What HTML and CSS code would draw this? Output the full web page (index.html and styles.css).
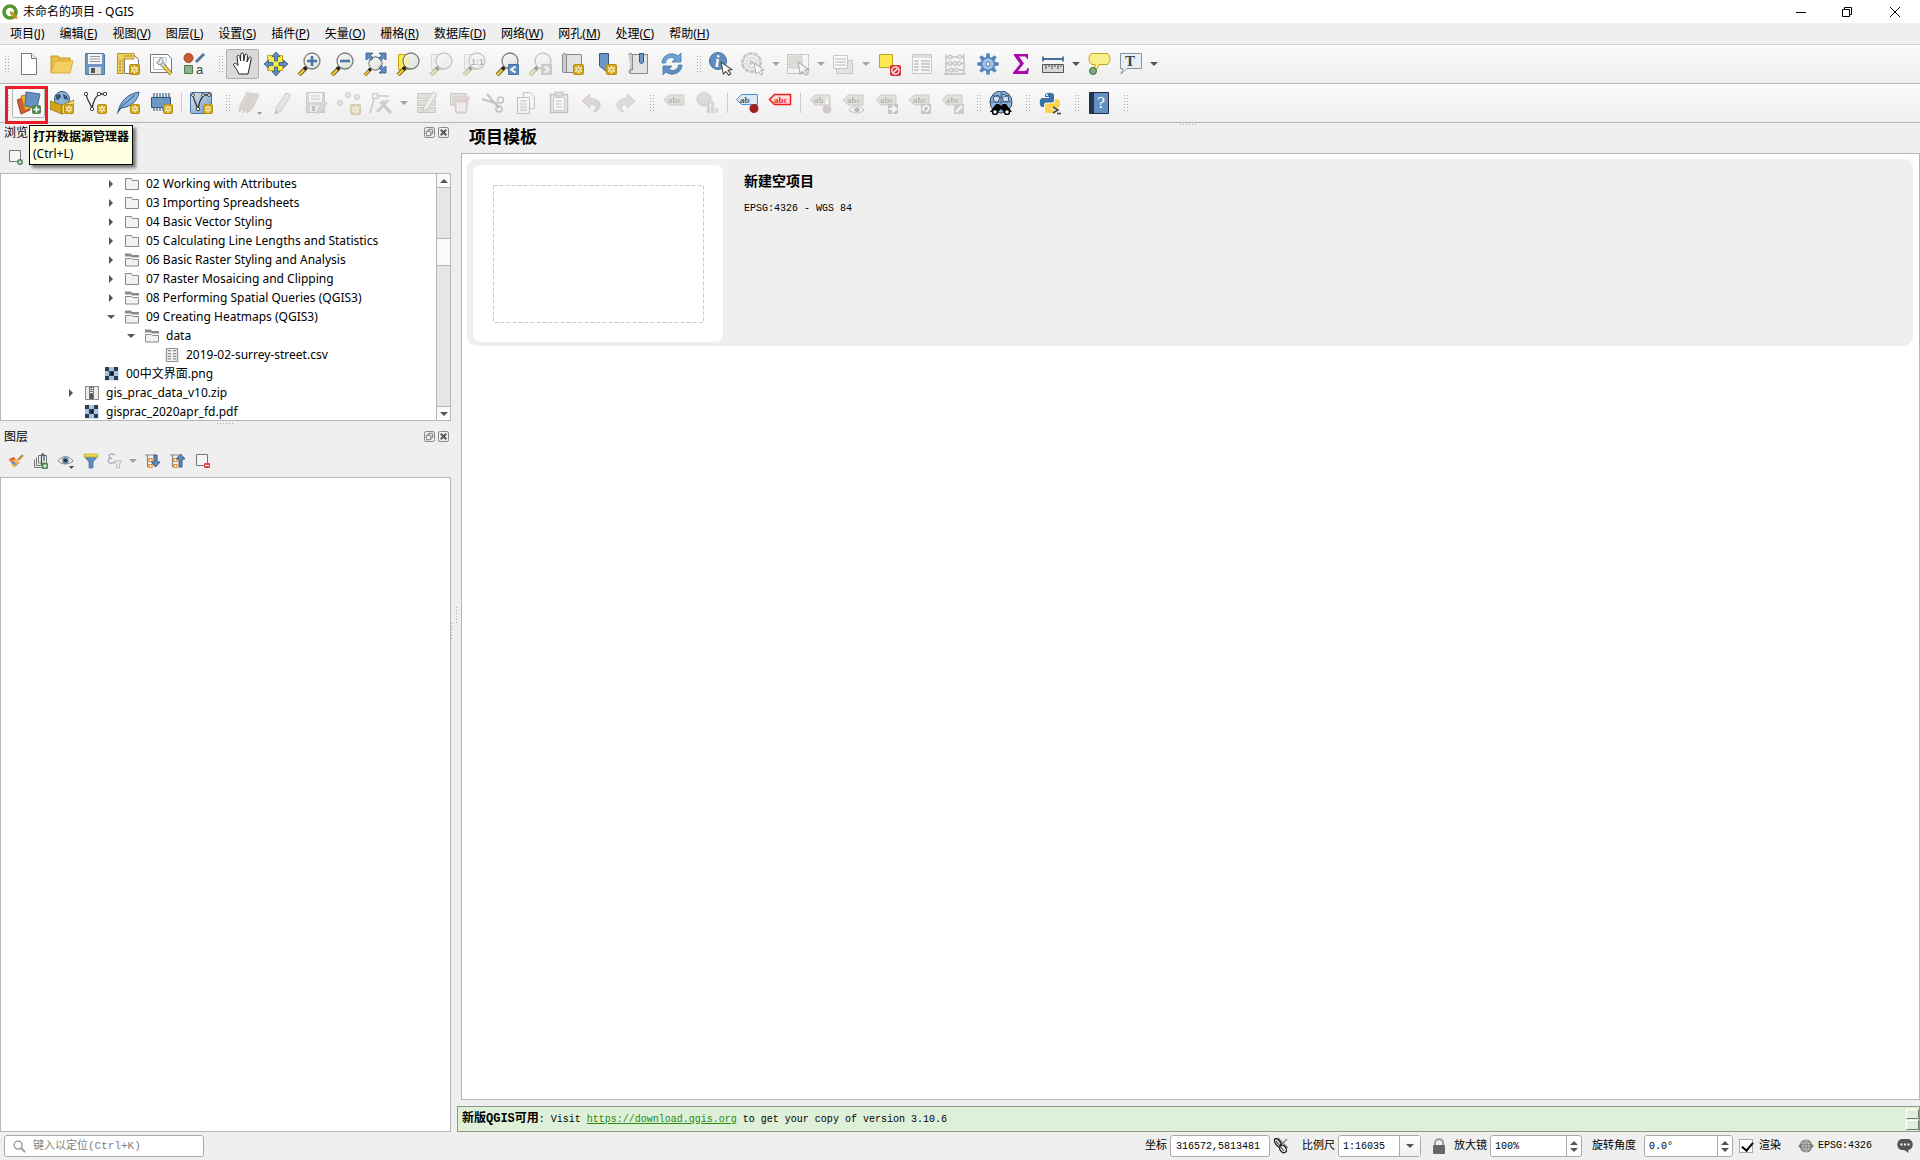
FILE: index.html
```
<!DOCTYPE html>
<html lang="zh-CN">
<head>
  <meta charset="UTF-8" />
  <meta name="viewport" content="width=device-width, initial-scale=1.0"/>
  <title>未命名的项目 - QGIS</title>
  <link rel="stylesheet" href="styles.css">
</head>
<body>

  <!-- 共用图形 -->
  <svg class="defs" aria-hidden="true">
    <defs>
      <linearGradient id="lensFill" x1="0" y1="0" x2="1" y2="1">
        <stop offset="0" stop-color="#fdfdfb"/><stop offset="1" stop-color="#d9ddd6"/>
      </linearGradient>
      <linearGradient id="blueFill" x1="0" y1="0" x2="1" y2="1">
        <stop offset="0" stop-color="#dbe6f1"/><stop offset="1" stop-color="#6d97c4"/>
      </linearGradient>
      <symbol id="new" viewBox="0 0 10 10">
        <rect x=".5" y=".5" width="9" height="9" rx="1.5" fill="#d0a820" stroke="#b98f10"/>
        <path d="M5 1.500V8.500M2 3.200L8 6.800M8 3.200L2 6.800" stroke="#fffbe0" stroke-width="1.300"/>
        <circle cx="5" cy="5" r="1.100" fill="#d0a820"/>
      </symbol>
      <symbol id="lens" viewBox="0 0 24 24">
        <path d="M2 23L9 16" stroke="#6b5a20" stroke-width="4"/>
        <path d="M2 23L7.500 17.500" stroke="#f2c92e" stroke-width="2.400"/>
        <path d="M7 17.500L10 14.500" stroke="#222" stroke-width="3.400"/>
        <circle cx="15" cy="9" r="8" fill="url(#lensFill)" stroke="#7a7d78" stroke-width="1.300"/>
      </symbol>
      <symbol id="cursor" viewBox="0 0 12 14">
        <path d="M1 1L11 8L7.500 8.500L10 12L8 13.300L5.500 9.800L3 12Z" fill="#fff" stroke="#444" stroke-width="1"/>
      </symbol>
      <symbol id="tag" viewBox="0 0 22 12">
        <path d="M6 1H21V11H6L1 6Z" fill="currentColor" stroke="#9a9670" stroke-width="1"/>
      </symbol>
      <symbol id="folder" viewBox="0 0 14 14">
        <path d="M.5 1.500H6.500L7.500 3.500H13.500V12.500H.5Z" fill="#f2f2f2" stroke="#8a8a86"/>
      </symbol>
      <symbol id="folder-link" viewBox="0 0 14 14">
        <path d="M0 .5H6L7 2H14V4.500H7L6 3.500H0Z" fill="#8a8a86"/>
        <path d="M.5 5.500H6.500L7.500 6.500H13.500V13H.5Z" fill="#f2f2f2" stroke="#8a8a86"/>
      </symbol>
      <symbol id="image" viewBox="0 0 14 14">
        <path d="M0 0H14V14H0Z" fill="#dfe9f4"/>
        <path d="M0 0H4V4H0ZM9 0H13V4H9ZM4 4H9V9H4ZM0 9H4V13H0ZM9 9H13V13H9Z" fill="#2c3e55"/>
        <path d="M4 0H9V4H4ZM0 4H4V9H0ZM9 4H13V9H9ZM4 9H9V13H4Z" fill="#a9c2de"/>
        <path d="M6 5.500H8V8H6Z" fill="#111"/>
      </symbol>
      <symbol id="float" viewBox="0 0 12 12">
        <rect x=".5" y=".5" width="11" height="11" rx="2" fill="none" stroke="#777"/>
        <rect x="4.500" y="2.500" width="5" height="5" rx="1" fill="none" stroke="#666"/>
        <rect x="2.500" y="4.500" width="5" height="5" rx="1" fill="#efefef" stroke="#666"/>
      </symbol>
      <symbol id="shut" viewBox="0 0 12 12">
        <rect x=".5" y=".5" width="11" height="11" rx="2" fill="none" stroke="#777"/>
        <path d="M3 3L9 9M9 3L3 9" stroke="#555" stroke-width="2"/>
      </symbol>
    </defs>
  </svg>

  <!-- 标题栏 -->
  <header class="titlebar">
    <svg class="logo" viewBox="0 0 16 16">
      <circle cx="8" cy="8" r="6" fill="none" stroke="#589632" stroke-width="3.600"/>
      <path d="M8.500 8L12 8.500L16 14.500H12.500Z" fill="#ee7913"/>
      <path d="M7.500 7.500H11L10.500 9L13 12L11.500 13.500L8.500 10.500Z" fill="#93b023"/>
    </svg>
    <h1>未命名的项目 - QGIS</h1>
    <div class="window-buttons">
      <button aria-label="最小化"><svg viewBox="0 0 10 10"><path d="M0 5.500H10" stroke="#000"/></svg></button>
      <button aria-label="还原"><svg viewBox="0 0 10 10"><path d="M.5 2.500H7.500V9.500H.5ZM2.500 2.500V.5H9.500V7.500H7.500" fill="none" stroke="#000"/></svg></button>
      <button aria-label="关闭"><svg viewBox="0 0 10 10"><path d="M0 0L10 10M10 0L0 10" stroke="#000"/></svg></button>
    </div>
  </header>

  <nav class="menubar">
    <button>项目(<u>J</u>)</button>
    <button>编辑(<u>E</u>)</button>
    <button>视图(<u>V</u>)</button>
    <button>图层(<u>L</u>)</button>
    <button>设置(<u>S</u>)</button>
    <button>插件(<u>P</u>)</button>
    <button>矢量(<u>O</u>)</button>
    <button>栅格(<u>R</u>)</button>
    <button>数据库(<u>D</u>)</button>
    <button>网络(<u>W</u>)</button>
    <button>网孔(<u>M</u>)</button>
    <button>处理(<u>C</u>)</button>
    <button>帮助(<u>H</u>)</button>
  </nav>

  <!-- 工具栏 1 -->
  <div class="toolbar">
    <i class="grip first"></i>
    <button aria-label="新建"><svg viewBox="0 0 24 24"><path d="M4.500 1.500H14.500L19.500 6.500V22.500H4.500Z" fill="#fff" stroke="#777"/><path d="M14.500 1.500V6.500H19.500" fill="#eee" stroke="#777"/></svg></button>
    <button aria-label="打开"><svg viewBox="0 0 24 24"><path d="M1 21V4H8L10 6H20V9" fill="#e6bd45" stroke="#c79b22"/><path d="M5 9H23L20 21H1Z" fill="#f3cf62" stroke="#d8ae3c"/></svg></button>
    <button aria-label="保存"><svg viewBox="0 0 24 24"><path d="M2.500 1.500H20.500L21.500 2.500V22.500H2.500Z" fill="#6d97c4" stroke="#55799f"/><path d="M5 2H19V12H5Z" fill="#f4f4f4"/><path d="M7 4.500H17M7 7H17M7 9.500H17" stroke="#999"/><path d="M6 15H18V22H6Z" fill="#e0e0e0"/><path d="M8 16H12V21H8Z" fill="#555"/></svg></button>
    <button aria-label="新建打印布局"><svg viewBox="0 0 24 24"><path d="M8.500 3.500H18.500L22.500 7.500V21.500H8.500Z" fill="#fff" stroke="#777"/><path d="M1.500 1.500H18V7H7V21.500H1.500Z" fill="#f0d264" stroke="#b99420"/><path d="M3 9H5M3 12H5M3 15H5M3 18H5M9 3V5M12 3V5M15 3V5" stroke="#8a6d10"/><use href="#new" x="13" y="12" width="11" height="11"/></svg></button>
    <button aria-label="布局管理器"><svg viewBox="0 0 24 24"><path d="M1.500 2.500H18.500L22.500 6.500V20.500H1.500Z" fill="#fff" stroke="#777"/><path d="M4.500 5.500H17V17.500H4.500Z" fill="none" stroke="#a9c2de"/><path d="M14 13L22 22" stroke="#8a6d10" stroke-width="4"/><path d="M14 13L22 22" stroke="#f0d264" stroke-width="2.400"/><path d="M10 9L15 14" stroke="#777" stroke-width="4"/><path d="M10 9L15 14" stroke="#ddd" stroke-width="2.500"/><path d="M12.500 6A3.500 3.500 0 1 1 7.500 10.500L10 9.500L10.500 7Z" fill="#eee" stroke="#888"/></svg></button>
    <button aria-label="样式管理器"><svg viewBox="0 0 24 24"><circle cx="6.500" cy="6" r="4.500" fill="#cc5a33" stroke="#a54322"/><path d="M22 2L14 10" stroke="#55799f" stroke-width="3"/><path d="M2.500 13.500H10.500V21.500H2.500Z" fill="#8cb48c" stroke="#4e7a4e"/><text x="14" y="22" class="glyph-a">a</text></svg></button>

    <i class="grip"></i>
    <button class="active" aria-label="平移地图"><svg viewBox="0 0 24 24"><path d="M8 22C6.500 18 3 14 2.500 12.500C3 11 5 11 7 13.500L6 4.500C6.500 2.800 8.500 3 8.800 4.500L9.500 9L9.800 2C10.500.5 12.500.7 12.700 2V9L14 2.800C15 1.600 16.500 2.200 16.600 3.500L16 10L18 5.500C19 4.500 20.500 5.300 20.300 6.500L18.500 15L17 22Z" fill="#fff" stroke="#222"/></svg></button>
    <button aria-label="平移至选择"><svg viewBox="0 0 24 24"><path d="M3.500 3.500H18.500V18.500H3.500Z" fill="#fae94b" stroke="#c3a51a"/><path d="M12 0L16 4.500H13.500V9H10.500V4.500H8ZM12 24L8 19.500H10.500V15H13.500V19.500H16ZM0 12L4.500 8V10.500H9V13.500H4.500V16ZM24 12L19.500 16V13.500H15V10.500H19.500V8Z" fill="#5e8ec0" stroke="#34597f" stroke-width=".8"/></svg></button>
    <button aria-label="放大"><svg viewBox="0 0 24 24"><use href="#lens"/><path d="M15 4V14M10 9H20" stroke="#4a77aa" stroke-width="2.600"/></svg></button>
    <button aria-label="缩小"><svg viewBox="0 0 24 24"><use href="#lens"/><path d="M10 9H20" stroke="#4a77aa" stroke-width="2.600"/></svg></button>
    <button aria-label="全图显示"><svg viewBox="0 0 24 24"><use href="#lens" x="0" y="4" width="20" height="20"/><path d="M3 1H10L7.500 3.500L10 6L8 8.500L5.500 6L3 8ZM23 1H16L18.500 3.500L16 6L18 8.500L20.500 6L23 8ZM23 21H16L18.500 18.500L16 16L18 13.500L20.500 16L23 14Z" fill="#5e8ec0" stroke="#34597f" stroke-width=".8"/></svg></button>
    <button aria-label="缩放到选择"><svg viewBox="0 0 24 24"><path d="M2.500 2.500H14V17.500H2.500Z" fill="#fae94b" stroke="#c3a51a"/><use href="#lens"/><path d="M14 3V15C8 14 8 5 14 3Z" fill="#f3ecae"/></svg></button>
    <button disabled aria-label="缩放到图层"><svg viewBox="0 0 24 24"><path d="M2.500 2.500H14V17.500H2.500Z" fill="#e8e8e4" stroke="#aaa"/><use href="#lens"/></svg></button>
    <button disabled aria-label="原始分辨率"><svg viewBox="0 0 24 24"><path d="M2.500 2.500H14V17.500H2.500Z" fill="#e8e8e4" stroke="#aaa"/><use href="#lens"/><text x="9" y="13" class="glyph-ratio">1:1</text></svg></button>
    <button aria-label="上一视图"><svg viewBox="0 0 24 24"><use href="#lens"/><path d="M13.500 12.500H23.500V22.500H13.500Z" fill="#5e8ec0" stroke="#46719d"/><path d="M20.500 14.500L16 17.500L20.500 20.500" fill="none" stroke="#fff" stroke-width="1.800"/></svg></button>
    <button disabled aria-label="下一视图"><svg viewBox="0 0 24 24"><use href="#lens"/><path d="M13.500 12.500H23.500V22.500H13.500Z" fill="#999" stroke="#888"/><path d="M16.500 14.500L21 17.500L16.500 20.500" fill="none" stroke="#fff" stroke-width="1.800"/></svg></button>
    <button aria-label="新建地图视图"><svg viewBox="0 0 24 24"><path d="M5.500 2.500H20.500V20.500H3.500V4Z" fill="#e2e2e2" stroke="#888"/><path d="M1.500 3C2 1 5.500 1 5.500 3V20.500H3C1.500 20.500 1.500 19 1.500 18Z" fill="#ccc" stroke="#888"/><use href="#new" x="12" y="12" width="11" height="11"/></svg></button>
    <button aria-label="新建书签"><svg viewBox="0 0 24 24"><path d="M5.500 1.500H14.500V21.500L10 17.500L5.500 14Z" fill="#6d97c4" stroke="#34597f"/><use href="#new" x="12" y="12" width="11" height="11"/></svg></button>
    <button aria-label="显示书签"><svg viewBox="0 0 24 24"><path d="M5.500 2.500H20.500V21.500H3.500V4Z" fill="#e2e2e2" stroke="#888"/><path d="M1.500 3C2 1 5.500 1 5.500 3V18H3C1.500 18 1.500 21.500 4 21.500" fill="#ccc" stroke="#888"/><path d="M12.500 1.500H16.500V10L14.500 12L12.500 10Z" fill="#6d97c4" stroke="#34597f"/></svg></button>
    <button aria-label="刷新"><svg viewBox="0 0 24 24"><path d="M2 11C2 3 12-1 18 4L21 1V10H12L15 7C11 4 6 6 5.500 11Z" fill="#6da1d8" stroke="#4678ad" stroke-width=".8"/><path d="M22 13C22 21 12 25 6 20L3 23V14H12L9 17C13 20 18 18 18.500 13Z" fill="#5e8ec0" stroke="#4678ad" stroke-width=".8"/></svg></button>

    <i class="grip"></i>
    <button aria-label="识别要素"><svg viewBox="0 0 24 24"><circle cx="9" cy="9" r="8.500" fill="#5e8ec0" stroke="#46719d"/><text x="6" y="15" class="glyph-i">i</text><use href="#cursor" x="11" y="9" width="13" height="15"/></svg></button>
    <button class="drop" disabled aria-label="运行动作"><svg viewBox="0 0 24 24"><circle cx="10.500" cy="10.500" r="9" fill="none" stroke="#888" stroke-width="3" stroke-dasharray="4.500 1"/><circle cx="10.500" cy="10.500" r="8" fill="#eee" stroke="#999"/><circle cx="10.500" cy="10.500" r="5" fill="#eee" stroke="#888"/><path d="M8.500 7.500L14 10.500L8.500 13.500Z" fill="#888"/><use href="#cursor" x="12" y="10" width="12" height="14"/></svg><i class="arrow"></i></button>
    <button class="drop" disabled aria-label="选择要素"><svg viewBox="0 0 24 24"><path d="M1.500 2.500H22.500V21.500H1.500Z" fill="none" stroke="#555" stroke-dasharray="2 1"/><path d="M3 4H16V16H3Z" fill="#bdb9a0" stroke="#999"/><use href="#cursor" x="11" y="9" width="13" height="15"/></svg><i class="arrow"></i></button>
    <button class="drop" disabled aria-label="按值选择"><svg viewBox="0 0 24 24"><path d="M9.500 8.500H21.500V21.500H5.500V14Z" fill="#cfccb4" stroke="#888"/><path d="M2.500 3.500H16.500V16.500H2.500Z" fill="#fff" stroke="#888"/><path d="M4 7H15M4 10H15M4 13H15" stroke="#999" stroke-width="1.500"/></svg><i class="arrow"></i></button>
    <button aria-label="取消选择"><svg viewBox="0 0 24 24"><path d="M2.500 2.500H15.500V15.500H2.500Z" fill="#fce94f" stroke="#c3a51a"/><rect x="13" y="13" width="11" height="11" rx="2" fill="#dc3030"/><circle cx="18.500" cy="18.500" r="3.600" fill="none" stroke="#fff" stroke-width="1.300"/><path d="M16.500 20.500L20.500 16.500" stroke="#fff" stroke-width="1.300"/></svg></button>
    <button disabled aria-label="属性表"><svg viewBox="0 0 24 24"><path d="M2.500 2.500H21.500V21.500H2.500Z" fill="#fff" stroke="#888"/><path d="M3 3H21V6H3Z" fill="#bbb"/><path d="M4 9H9M11 9H20M4 12H9M11 12H20M4 15H9M11 15H20M4 18H9M11 18H20" stroke="#777" stroke-width="1.300"/></svg></button>
    <button disabled aria-label="字段计算器"><svg viewBox="0 0 24 24"><path d="M3 2V22M21 2V22M1 22H23M3 5H21M3 11.500H21M3 18H21" fill="none" stroke="#777" stroke-width="1.300"/><g fill="#ddc" stroke="#666"><circle cx="7" cy="5" r="2"/><circle cx="17" cy="5" r="2"/><circle cx="7" cy="11.500" r="2"/><circle cx="12" cy="11.500" r="2"/><circle cx="16" cy="11.500" r="2"/><circle cx="8" cy="18" r="2"/><circle cx="13" cy="18" r="2"/></g></svg></button>
    <button aria-label="工具箱"><svg viewBox="0 0 24 24"><g stroke="#5e8ec0" stroke-width="4" stroke-linecap="round"><path d="M12 3V21M3 12H21M5.600 5.600L18.400 18.400M18.400 5.600L5.600 18.400"/></g><circle cx="12" cy="12" r="6.500" fill="#a5c2e6" stroke="#4c7db3" stroke-width="1.500"/><circle cx="12" cy="12" r="2" fill="#fff" stroke="#4c7db3"/></svg></button>
    <button aria-label="统计汇总"><svg viewBox="0 0 24 24"><path d="M5 2H19V7H18C17.500 5 17 4.500 14 4.500H10L15 11.500L9 19H15C17.500 19 18 18 18.500 16H20L19 22H4V20.500L11 12L5 3.500Z" fill="#a90ba9"/></svg></button>
    <button class="drop" aria-label="测量"><svg viewBox="0 0 24 24"><path d="M2 7H22M2 4.500V9.500M22 4.500V9.500" stroke="#456f9e" stroke-width="1.800"/><path d="M1.500 12.500H22.500V20.500H1.500Z" fill="#d8d8d8" stroke="#555"/><path d="M5 13V17M8 13V15M11 13V17M14 13V15M17 13V17M20 13V15" stroke="#444"/></svg><i class="arrow"></i></button>
    <button aria-label="地图提示"><svg viewBox="0 0 24 24"><path d="M5 1.500H20C24 3 24 10 20 12.500H12C11 16 9 18 6 19C8 17 8 15 8 12.500H5C1 10 1 3 5 1.500Z" fill="#f9f08b" stroke="#c3a51a"/><circle cx="6" cy="19" r="3.500" fill="#79aa79" stroke="#466e46"/></svg></button>
    <button class="drop" aria-label="文字注记"><svg viewBox="0 0 24 24"><path d="M1.500 1.500H22.500V16.500H8L2 22L4 16.500H1.500Z" fill="#e9f1f6" stroke="#8b9298"/><text x="6" y="14" class="glyph-t">T</text></svg><i class="arrow"></i></button>
  </div>

  <!-- 工具栏 2 -->
  <div class="toolbar">
    <i class="grip first"></i>
    <button class="hovered" aria-label="打开数据源管理器"><svg viewBox="0 0 24 24"><path d="M0 9L8 6L13 19L4 23Z" fill="#cf5f37" stroke="#a54322"/><path d="M4 5L14 3L17 16L8 19Z" fill="#efb52b" stroke="#b78212"/><path d="M9 1L23 3L20 17L8 15Z" fill="#6592c3" stroke="#3f6894"/><rect x="15" y="14" width="9" height="9" rx="2" fill="#4e8a55"/><path d="M19.500 15.500V21.500M16.500 18.500H22.500" stroke="#fff" stroke-width="1.600"/></svg>
      <!-- 悬停提示 -->
      <span class="mark"></span>
      <span class="tooltip" role="tooltip"><b>打开数据源管理器</b><span>(Ctrl+L)</span></span>
    </button>
    <button aria-label="新建 GeoPackage 图层"><svg viewBox="0 0 24 24"><circle cx="12" cy="8" r="7.500" fill="#8db2d9" stroke="#34597f"/><path d="M6 4L10 3L11 6L8 9L6 8ZM13 3L17 5L18 9L14 8Z" fill="#33526f"/><path d="M0 10L12 14V23L0 18Z" fill="#d6a416" stroke="#8a6d10" stroke-width=".8"/><path d="M12 14L24 9V18L12 23Z" fill="#f7df55" stroke="#8a6d10" stroke-width=".8"/><use href="#new" x="14" y="13" width="10" height="10"/></svg></button>
    <button aria-label="新建 Shapefile 图层"><svg viewBox="0 0 24 24"><path d="M3 3C4 10 8 12 9 18C10 9 14 4 17 3H22" fill="none" stroke="#333" stroke-width="1.300"/><g fill="#fff" stroke="#444"><circle cx="3" cy="3" r="1.700"/><circle cx="9" cy="18" r="1.700"/><circle cx="16" cy="3" r="1.700"/><circle cx="22" cy="3" r="1.700"/></g><use href="#new" x="14" y="13" width="10" height="10"/></svg></button>
    <button aria-label="新建 SpatiaLite 图层"><svg viewBox="0 0 24 24"><path d="M2 21C4 11 11 3 23 1C22 9 16 16 5 17Z" fill="#85b0dc" stroke="#34597f"/><path d="M1 23L5 16L19 4" fill="none" stroke="#34597f"/><use href="#new" x="14" y="13" width="10" height="10"/></svg></button>
    <button aria-label="新建临时图层"><svg viewBox="0 0 24 24"><path d="M5 2V20M8 2V20M11 2V20M14 2V20M17 2V20M20 2V20" stroke="#34597f" stroke-width="1.200"/><path d="M2.500 6.500H21.500V16.500H2.500Z" fill="#6d97c4" stroke="#34597f"/><use href="#new" x="14" y="13" width="10" height="10"/></svg></button>
    <i class="sep"></i>
    <button aria-label="新建虚拟图层"><svg viewBox="0 0 24 24"><rect x="1.500" y="1.500" width="21" height="21" rx="1" fill="url(#blueFill)" stroke="#46719d"/><path d="M4 4C5 11 8 13 9 19C10 10 14 5 15 4H20" fill="none" stroke="#333" stroke-width="1.300"/><g fill="#fff" stroke="#444"><circle cx="4" cy="4" r="1.500"/><circle cx="9" cy="18" r="1.700"/><circle cx="14" cy="4" r="1.500"/><circle cx="20" cy="4" r="1.500"/></g><use href="#new" x="14" y="13" width="10" height="10"/></svg></button>

    <i class="grip"></i>
    <button disabled aria-label="当前编辑"><svg viewBox="0 0 24 24"><g fill="#b9a79c" stroke="#8d8680" stroke-width=".8"><path d="M1 21L2 15L9 1L13 3L6 17Z"/><path d="M5 22L6 16L13 2L17 4L10 18Z"/><path d="M9 22L10 16L17 2L21 4L14 18Z"/></g><path d="M19 21H24L21.500 24Z" fill="#222"/></svg></button>
    <button disabled aria-label="切换编辑"><svg viewBox="0 0 24 24"><path d="M4 23L5 17L15 2L20 4L10 20Z" fill="#ceccc0" stroke="#888"/><path d="M4 23L5 20L7 21Z" fill="#555"/></svg></button>
    <button disabled aria-label="保存编辑"><svg viewBox="0 0 24 24"><path d="M2.500 1.500H20.500V21.500H2.500Z" fill="#aaa" stroke="#888"/><path d="M5 2H18V11H5Z" fill="#f4f4f4"/><path d="M7 5H16M7 8H16" stroke="#888"/><path d="M6 14H16V21H6Z" fill="#ddd"/><path d="M8 15H11V20H8Z" fill="#777"/><path d="M13 23L14 18L19 10L23 12L17 21Z" fill="#c9a9a9" stroke="#999"/></svg></button>
    <button disabled aria-label="添加点要素"><svg viewBox="0 0 24 24"><g fill="#ccc" stroke="#888"><circle cx="3" cy="12" r="2.500"/><circle cx="11" cy="4" r="2.500"/><circle cx="20" cy="6" r="2.500"/></g><use href="#new" x="13" y="13" width="11" height="11"/></svg></button>
    <button class="drop" disabled aria-label="顶点工具"><svg viewBox="0 0 24 24"><path d="M1 22L6 5H20" fill="none" stroke="#888" stroke-width="1.500"/><path d="M3.500 2.500H8.500V7.500H3.500Z" fill="#eee" stroke="#777"/><path d="M13 12L22 22" stroke="#888" stroke-width="3"/><path d="M19 9L8 21" stroke="#999" stroke-width="3"/><path d="M10 12L14 9L17 12L14 15Z" fill="#999"/></svg><i class="arrow"></i></button>
    <button disabled aria-label="修改属性"><svg viewBox="0 0 24 24"><path d="M2.500 2.500H20.500V7.500H2.500ZM2.500 9.500H20.500V14.500H2.500ZM2.500 16.500H20.500V21.500H2.500Z" fill="#c7c3a9" stroke="#8d8970"/><path d="M8 20L9 15L18 1L22 3L13 18Z" fill="#e4e4e4" stroke="#888"/></svg></button>
    <button disabled aria-label="删除所选"><svg viewBox="0 0 24 24"><path d="M2.500 2.500H18V14H2.500Z" fill="#c7c3a9" stroke="#8d8970"/><path d="M5 6H21V9H5ZM6 10H20L18 22H8Z" fill="#ddb5b5" stroke="#a98080"/><path d="M10 12V20M13 12V20M16 12V20" stroke="#fff" stroke-width="1.500"/></svg></button>
    <button disabled aria-label="剪切"><svg viewBox="0 0 24 24"><path d="M1 8L17 13M6 3L18 17" stroke="#777" stroke-width="2"/><circle cx="19.500" cy="9" r="3" fill="none" stroke="#777" stroke-width="1.500"/><circle cx="18" cy="18" r="3" fill="none" stroke="#777" stroke-width="1.500"/></svg></button>
    <button disabled aria-label="复制"><svg viewBox="0 0 24 24"><path d="M9.500 1.500H16L20.500 6V17.500H9.500Z" fill="#f5f5f5" stroke="#777"/><path d="M3.500 6.500H15.500V22.500H3.500Z" fill="#f5f5f5" stroke="#777"/><path d="M6 10H13M6 13H13M6 16H13M6 19H13" stroke="#777"/></svg></button>
    <button disabled aria-label="粘贴"><svg viewBox="0 0 24 24"><path d="M3.500 3.500H20.500V21.500H3.500Z" fill="#ddd" stroke="#777" stroke-width="1.500"/><path d="M6.500 6.500H17.500V19.500H6.500Z" fill="#fff" stroke="#888"/><path d="M8 1H16V5H8Z" fill="#bbb" stroke="#777"/><path d="M9 10H15M9 13H15M9 16H15" stroke="#777"/></svg></button>
    <button disabled aria-label="撤销"><svg viewBox="0 0 24 24"><path d="M2 10L10 3V7.500C24 8 22 20 13 21C18 17 16 13 10 13V17Z" fill="#bfa9a0" stroke="#a08b82"/></svg></button>
    <button disabled aria-label="重做"><svg viewBox="0 0 24 24"><path d="M22 10L14 3V7.500C0 8 2 20 11 21C6 17 8 13 14 13V17Z" fill="#b5bdb5" stroke="#8f998f"/></svg></button>

    <i class="grip"></i>
    <button disabled aria-label="图层标注"><svg viewBox="0 0 24 24"><use href="#tag" x="1" y="3" width="22" height="12" color="#c7c3a9"/><text x="6" y="12" class="glyph-abc">abc</text></svg></button>
    <button disabled aria-label="图层图表"><svg viewBox="0 0 24 24"><circle cx="9" cy="8" r="7" fill="#a9b9a9" stroke="#888"/><path d="M9 8L4 3A7 7 0 0 1 14 3Z" fill="#ccb5b5"/><path d="M12 14H15V22H12Z" fill="#b5a0a0"/><path d="M16 10H19V22H16Z" fill="#99b0a8"/><path d="M20 17H23V22H20Z" fill="#b9b48c"/></svg></button>
    <i class="sep"></i>
    <button aria-label="突出固定标注"><svg viewBox="0 0 24 24"><path d="M6.500 3.500H22.500V13.500H6.500L1.500 8.500Z" fill="#d7e8f8" stroke="#4c90d9"/><text x="5" y="12" class="glyph-abc">ab</text><path d="M18.500 8V14" stroke="#eee" stroke-width="2"/><circle cx="19" cy="17.500" r="4.500" fill="#a02020"/></svg></button>
    <button aria-label="未放置标注"><svg viewBox="0 0 24 24"><path d="M6.500 3.500H22.500V13.500H6.500L1.500 8.500Z" fill="#ffdcdc" stroke="#f01c1c" stroke-width="1.500"/><text x="6" y="12" class="glyph-abc red">abc</text></svg></button>
    <i class="sep"></i>
    <button disabled aria-label="固定标注"><svg viewBox="0 0 24 24"><use href="#tag" x="1" y="3" width="22" height="12" color="#c7c3a9"/><text x="6" y="12" class="glyph-abc">ab</text><path d="M19 8V14" stroke="#fff" stroke-width="2"/><circle cx="19" cy="18" r="4.500" fill="#a58c8c"/></svg></button>
    <button disabled aria-label="显示隐藏标注"><svg viewBox="0 0 24 24"><use href="#tag" x="1" y="3" width="22" height="12" color="#c7c3a9"/><text x="6" y="12" class="glyph-abc">abc</text><path d="M8 19C12 13 19 13 23 19C19 23 12 23 8 19Z" fill="#eee" stroke="#777"/><circle cx="16" cy="18.500" r="2.500" fill="#666"/></svg></button>
    <button disabled aria-label="移动标注"><svg viewBox="0 0 24 24"><use href="#tag" x="1" y="3" width="22" height="12" color="#c7c3a9"/><text x="6" y="12" class="glyph-abc">abc</text><path d="M14 13H24V23H14Z" fill="#888"/><path d="M15 18H19M19 15L22.500 18L19 21Z" fill="#fff" stroke="#fff" stroke-width="1.500"/></svg></button>
    <button disabled aria-label="旋转标注"><svg viewBox="0 0 24 24"><use href="#tag" x="1" y="3" width="22" height="12" color="#c7c3a9"/><text x="6" y="12" class="glyph-abc">abc</text><path d="M14 13H24V23H14Z" fill="#888"/><path d="M17 20C14 16 19 13 21.500 16C22.500 18 21 20 19 20.500" fill="none" stroke="#fff" stroke-width="1.800"/></svg></button>
    <button disabled aria-label="更改标注"><svg viewBox="0 0 24 24"><use href="#tag" x="1" y="3" width="22" height="12" color="#c7c3a9"/><text x="6" y="12" class="glyph-abc">abc</text><path d="M14 13H24V23H14Z" fill="#999580"/><path d="M16 21L22 15" stroke="#fff" stroke-width="2.400"/></svg></button>

    <i class="grip"></i>
    <button aria-label="元数据搜索"><svg viewBox="0 0 24 24"><circle cx="12" cy="11" r="11" fill="#90b4dc" stroke="#2b4a6b"/><path d="M4 6L9 4L11 7L8 12L5 10ZM13 3L19 5L20 10L15 11L13 7Z" fill="#d6e4f2" stroke="#2b4a6b"/><path d="M1 11H23M12 0V14M4 4C9 7 15 7 20 4" fill="none" stroke="#44688e"/><path d="M7 13H10L12 15L14 13H17L23 21H15L12 18L9 21H1Z" fill="#000"/><circle cx="6" cy="21" r="2.500" fill="#fff" stroke="#000" stroke-width="1.500"/><circle cx="18" cy="21" r="2.500" fill="#fff" stroke="#000" stroke-width="1.500"/></svg></button>
    <i class="grip"></i>
    <button aria-label="Python 控制台"><svg viewBox="0 0 24 24"><path d="M7 7V4C7 1 16 1 16 4V9C16 11 15 11.500 13 11.500H9C6 11.500 6 13 6 16H4C1 16 1 7 4 7H11V6H7Z" fill="#3773a5"/><path d="M17 8H19C23 8 23 17 19 17H12V18H16V20C16 23 7 23 7 20V15C7 13 8 12.500 10 12.500H14C17 12.500 17 11 17 8Z" fill="#ffd343"/><circle cx="9" cy="4" r="1" fill="#fff"/><path d="M15 16L20 19L15 22M19 22.500H23" fill="none" stroke="#444" stroke-width="1.500"/></svg></button>
    <i class="grip"></i>
    <button aria-label="帮助"><svg viewBox="0 0 24 24"><path d="M2.500 1.500H21.500V22.500H2.500Z" fill="#6390c2" stroke="#1d2d3f"/><path d="M3 2H7V22H3Z" fill="#22354a"/><text x="10" y="17" class="glyph-q">?</text></svg></button>
    <i class="grip"></i>
  </div>

  <main class="workspace">
    <div class="docks">
      <section class="dock browser">
        <div class="dock-title">
          <h2>浏览</h2>
          <button aria-label="浮动"><svg><use href="#float"/></svg></button>
          <button aria-label="关闭"><svg><use href="#shut"/></svg></button>
        </div>
        <div class="dock-tools">
          <button aria-label="添加图层"><svg viewBox="0 0 16 16"><path d="M1.500 1.500H12.500V12.500H1.500Z" fill="#f5f5f5" stroke="#777"/><circle cx="12" cy="13" r="2.300" fill="#bfe0bf" stroke="#4e8a55" stroke-width="1.500"/></svg></button>
        </div>
        <div class="tree-box">
          <ul class="tree">
            <li class="lvl2 closed"><svg><use href="#folder"/></svg>02 Working with Attributes</li>
            <li class="lvl2 closed"><svg><use href="#folder"/></svg>03 Importing Spreadsheets</li>
            <li class="lvl2 closed"><svg><use href="#folder"/></svg>04 Basic Vector Styling</li>
            <li class="lvl2 closed"><svg><use href="#folder"/></svg>05 Calculating Line Lengths and Statistics</li>
            <li class="lvl2 closed"><svg><use href="#folder-link"/></svg>06 Basic Raster Styling and Analysis</li>
            <li class="lvl2 closed"><svg><use href="#folder"/></svg>07 Raster Mosaicing and Clipping</li>
            <li class="lvl2 closed"><svg><use href="#folder-link"/></svg>08 Performing Spatial Queries (QGIS3)</li>
            <li class="lvl2 open"><svg><use href="#folder-link"/></svg>09 Creating Heatmaps (QGIS3)</li>
            <li class="lvl3 open"><svg><use href="#folder-link"/></svg>data</li>
            <li class="lvl4"><svg viewBox="0 0 14 16"><path d="M.5 .5H13.500V15.500H.5Z" fill="#f5f5f5" stroke="#777"/><path d="M2 3H6M8 3H12M2 6.500H6M8 6.500H12M2 9.500H6M8 9.500H12M2 12.500H6M8 12.500H12" stroke="#888" stroke-width="1.300"/></svg>2019-02-surrey-street.csv</li>
            <li class="lvl1"><svg><use href="#image"/></svg>00中文界面.png</li>
            <li class="lvl0 closed"><svg viewBox="0 0 14 14"><path d="M.5 .5H13.500V13.500H.5Z" fill="#ececec" stroke="#8a8a86"/><path d="M4.500 .5V13M8.500 .5V13" stroke="#777"/><path d="M6.500 1V8" stroke="#333" stroke-width="2" stroke-dasharray="1 1"/><path d="M5 8H8V13H5Z" fill="#555"/></svg>gis_prac_data_v10.zip</li>
            <li class="lvl0"><svg><use href="#image"/></svg>gisprac_2020apr_fd.pdf</li>
          </ul>
          <div class="scrollbar">
            <button aria-label="向上"><i class="up"></i></button>
            <div class="track"><div class="thumb"></div></div>
            <button aria-label="向下"><i class="down"></i></button>
          </div>
        </div>
      </section>

      <i class="split-h"></i>

      <section class="dock layers">
        <div class="dock-title">
          <h2>图层</h2>
          <button aria-label="浮动"><svg><use href="#float"/></svg></button>
          <button aria-label="关闭"><svg><use href="#shut"/></svg></button>
        </div>
        <div class="dock-tools">
          <button aria-label="图层样式"><svg viewBox="0 0 16 16"><path d="M1 6L6 4L11 10L6 13Z" fill="#e04b3a"/><path d="M1 7L5 6L8 10L5 12Z" fill="#f08030"/><path d="M4 9L8 8L10 11L7 14L4 12Z" fill="#5b8fd0"/><path d="M3 11L8 12L6 15Z" fill="#f6c63c"/><path d="M7 5L12 10L9 12L5 8Z" fill="#e8b070"/><path d="M10 7L15 2" stroke="#c98a3c" stroke-width="2.400"/></svg></button>
          <button aria-label="添加组"><svg viewBox="0 0 16 16"><path d="M1.500 6.500V14.500H9M3.500 4.500V12.500H10M5.500 2.500H13.500V10H5.500Z" fill="none" stroke="#777"/><path d="M8.500 12V3C8.500 0 11 0 11 3V8" fill="none" stroke="#34597f" stroke-width="1.200"/><rect x="9" y="10" width="6" height="6" rx="1" fill="#4e8a55"/><path d="M12 11V15M10 13H14" stroke="#fff"/></svg></button>
          <button aria-label="管理地图主题"><svg viewBox="0 0 16 16"><path d="M0 8C4 2 11 2 15 8C11 12 4 12 0 8Z" fill="#eee" stroke="#888"/><circle cx="7.500" cy="7.500" r="3.200" fill="#5279a5"/><circle cx="7.500" cy="7.500" r="1.300" fill="#111"/><path d="M11 13H16L13.500 16Z" fill="#444"/></svg></button>
          <button aria-label="过滤图例"><svg viewBox="0 0 16 16"><path d="M1 3H15L10 9V15H6V9Z" fill="#5e8ec0" stroke="#46719d" stroke-width=".8"/><path d="M1 1H15V4H1Z" fill="#ecd94b" stroke="#b9a320" stroke-width=".6"/></svg></button>
          <button class="drop" disabled aria-label="按表达式过滤"><svg viewBox="0 0 16 16"><path d="M8 2C5 0 1 1 2.500 4C3 5 4 5 5 5C1 5 0 9 3 10C5 10.500 7 10 8 8.500" fill="none" stroke="#777" stroke-width="1.500"/><path d="M7 8H15L12.500 11V15H9.500V11Z" fill="#eee" stroke="#888"/></svg><i class="arrow"></i></button>
          <button aria-label="全部展开"><svg viewBox="0 0 16 16"><path d="M0 2H9M2.500 2V13.500H6M2.500 7H5" fill="none" stroke="#888" stroke-width="1.200"/><path d="M4 5.500H7V8.500H4ZM4 11.500H7V14.500H4Z" fill="#fff" stroke="#f08a1c" stroke-width="1.200"/><path d="M9 2H12V9H15L10.500 14L6.500 9H9Z" fill="#5e8ec0" stroke="#34597f"/></svg></button>
          <button aria-label="全部折叠"><svg viewBox="0 0 16 16"><path d="M0 2H9M2.500 2V13.500H6M2.500 7H5" fill="none" stroke="#888" stroke-width="1.200"/><path d="M4 5.500H7V8.500H4ZM4 11.500H7V14.500H4Z" fill="#fff" stroke="#f08a1c" stroke-width="1.200"/><path d="M9 14H12V6H15L10.500 1L6.500 6H9Z" fill="#5e8ec0" stroke="#34597f"/></svg></button>
          <button aria-label="移除图层"><svg viewBox="0 0 16 16"><path d="M1.500 1.500H12.500V12.500H1.500Z" fill="#f5f5f5" stroke="#777"/><rect x="9" y="10" width="6" height="5" rx="1" fill="#e84040"/><path d="M10 12.500H14" stroke="#fff"/></svg></button>
        </div>
        <div class="layer-list"></div>
      </section>
    </div>

    <div class="split-v"><i></i><i></i></div>

    <section class="center">
      <h2>项目模板</h2>
      <div class="templates">
        <article class="template">
          <div class="preview"><svg><rect x=".5" y=".5" width="210" height="137" fill="none" stroke="#ccc" stroke-dasharray="4 2"/></svg></div>
          <div class="info">
            <h3>新建空项目</h3>
            <p>EPSG:4326 - WGS 84</p>
          </div>
        </article>
      </div>
      <div class="news">
        <p><b>新版QGIS可用</b>: Visit <a href="https://download.qgis.org">https://download.qgis.org</a> to get your copy of version 3.10.6</p>
        <div class="news-scroll"><button aria-label="向上"></button><button aria-label="向下"></button></div>
      </div>
    </section>
  </main>

  <!-- 状态栏 -->
  <footer class="statusbar">
    <label class="locator">
      <svg viewBox="0 0 14 14"><circle cx="5.500" cy="5.500" r="4.300" fill="none" stroke="#999" stroke-width="1.500"/><path d="M8.500 8.500L13 13" stroke="#999" stroke-width="2"/></svg>
      <input type="text" placeholder="键入以定位(Ctrl+K)" aria-label="定位">
    </label>
    <div class="status-group coord">
      <label for="coord">坐标</label>
      <input id="coord" type="text" value="316572,5813481">
      <button aria-label="切换范围显示"><svg viewBox="0 0 16 16"><path d="M1 1L14 14M5 0L15 10M14 1L10 5" stroke="#777" stroke-width="1.200"/><ellipse cx="5" cy="5" rx="2.500" ry="5" transform="rotate(-35 5 5)" fill="#ddd" stroke="#222" stroke-width="1.300"/><ellipse cx="10" cy="11" rx="3" ry="4" transform="rotate(-35 10 11)" fill="#eee" stroke="#222" stroke-width="1.300"/><path d="M3 3L11 13M6 8L9 5" stroke="#222"/></svg></button>
    </div>
    <div class="status-group scale">
      <label for="scale">比例尺</label>
      <div class="field combo"><input id="scale" type="text" value="1:16035"><button aria-label="选择比例尺"><i class="arrow"></i></button></div>
      <button aria-label="锁定比例尺"><svg viewBox="0 0 16 16"><path d="M4 8V5C4 0 12 0 12 5V8" fill="none" stroke="#999" stroke-width="1.800"/><rect x="2" y="7" width="12" height="9" rx="1" fill="#666"/></svg></button>
    </div>
    <div class="status-group magnifier">
      <label for="mag">放大镜</label>
      <div class="field"><input id="mag" type="text" value="100%"><button aria-label="调整放大率"><i class="up"></i><i class="down"></i></button></div>
    </div>
    <div class="status-group rotation">
      <label for="rot">旋转角度</label>
      <div class="field"><input id="rot" type="text" value="0.0°"><button aria-label="调整旋转角度"><i class="up"></i><i class="down"></i></button></div>
    </div>
    <div class="status-group render">
      <input id="render" type="checkbox" checked>
      <label for="render">渲染</label>
    </div>
    <button class="crs"><svg viewBox="0 0 16 16"><circle cx="8" cy="8" r="6.500" fill="#777"/><path d="M0 8H16M8 1V15M2 5H14M2 11H14M8 1C4 5 4 11 8 15C12 11 12 5 8 1" fill="none" stroke="#ccc" stroke-width=".8"/><path d="M0 8L3 6V10ZM16 8L13 6V10Z" fill="#777"/></svg>EPSG:4326</button>
    <button class="messages" aria-label="消息"><svg viewBox="0 0 16 16"><path d="M4 1H12C17 3 17 10 12 12H11L12 15L7 12H4C-1 10-1 3 4 1Z" fill="#555"/><path d="M3.500 6.500H12.500" stroke="#fff" stroke-width="2" stroke-dasharray="2 1.500"/></svg></button>
  </footer>

</body>
</html>
```

FILE: styles.css
```
* {
  box-sizing: border-box;
}
body {
  margin: 0;
  height: 100vh;
  display: flex;
  flex-direction: column;
  overflow: hidden;
  background: #efefef;
  color: #000;
  font-family: "Noto Sans", "Noto Sans CJK SC", sans-serif;
  font-size: 12px;
  line-height: 16px;
}
h1, h2, h3, p, ul {
  margin: 0;
  padding: 0;
}
h1, .dock-title h2 {
  font-size: 12px;
  font-weight: normal;
}
button {
  padding: 0;
  border: none;
  background: none;
  color: inherit;
  font: inherit;
}
input {
  min-width: 0;
  font: inherit;
}
svg {
  display: block;
  flex: none;
}
.defs {
  position: absolute;
  width: 0;
  height: 0;
}
/* 小三角 */
.arrow, .down, .up {
  display: block;
  flex: none;
  border: 4px solid transparent;
  border-bottom-width: 0;
  border-top-color: #555;
}
.up {
  border-bottom: 4px solid #555;
  border-top: none;
}

/* 标题栏 */
.titlebar {
  display: flex;
  align-items: center;
  height: 23px;
  flex: none;
  padding-left: 2px;
  background: #fff;
}
.logo {
  width: 16px;
  height: 16px;
  margin-right: 5px;
}
.window-buttons {
  display: flex;
  margin-left: auto;
}
.window-buttons button {
  display: flex;
  justify-content: center;
  width: 46px;
}
.window-buttons button:last-child {
  width: 50px;
}
.window-buttons svg {
  width: 10px;
  height: 10px;
}
.menubar {
  display: flex;
  gap: 1px;
  height: 22px;
  flex: none;
  padding-left: 3px;
  border-bottom: 1px solid #d4d4d4;
}
.menubar button {
  padding: 0 7px;
}

/* 工具栏 */
.toolbar {
  display: flex;
  align-items: center;
  height: 39px;
  flex: none;
  border-bottom: 1px solid #b6b6b6;
  background: linear-gradient(#fafafa, #eee);
}
.toolbar button {
  position: relative;
  display: flex;
  align-items: center;
  justify-content: center;
  width: 33px;
  height: 30px;
  border-radius: 2px;
}
.toolbar svg {
  width: 24px;
  height: 24px;
}
.toolbar .drop {
  justify-content: flex-start;
  width: 45px;
  padding-left: 4px;
  gap: 7px;
}
.toolbar button:disabled svg {
  opacity: 0.4;
  filter: grayscale(0.4);
}
.toolbar button:disabled .arrow, .dock-tools button:disabled {
  opacity: 0.5;
}
.toolbar .active {
  border: 1px solid #b0b0b0;
  background: #dadada;
}
.toolbar .hovered {
  border: 1px solid #b6b6b6;
  background: #f8f8f8;
}
.grip {
  width: 16px;
  height: 16px;
  flex: none;
  padding: 0 3px 0 9px;
  background: conic-gradient(from 0deg at 1px 1px, transparent 75%, #aaa 0) 0 0 / 3px 3px content-box;
}
.grip.first {
  width: 12px;
  padding: 0 3px 0 5px;
}
.sep {
  width: 7px;
  height: 20px;
  flex: none;
  padding: 0 2px 0 4px;
  background: #ccc content-box;
}
.glyph-a { font: 13px "Liberation Sans", sans-serif; fill: #444; }
.glyph-ratio { font: bold 9px "Liberation Sans", sans-serif; fill: #555; }
.glyph-i { font: italic bold 16px "Liberation Serif", serif; fill: #fff; }
.glyph-t { font: bold 15px "Liberation Serif", serif; fill: #444; }
.glyph-q { font: 15px "DejaVu Serif", serif; fill: #fff; }
.glyph-abc { font: bold 9px "Liberation Serif", serif; fill: #555; }
.glyph-abc.red { fill: #f01c1c; }

/* 红框与提示 */
.mark {
  position: absolute;
  left: -8px;
  top: -3px;
  width: 43px;
  height: 38px;
  border: 3px solid #ed1c24;
}
.tooltip {
  position: absolute;
  left: 16px;
  top: 36px;
  z-index: 10;
  display: flex;
  flex-direction: column;
  width: 104px;
  height: 40px;
  padding: 2px 3px;
  border: 1px solid #000;
  background: #ffffe1;
  box-shadow: 3px 3px 3px rgba(0, 0, 0, 0.5);
  text-align: left;
  line-height: 17px;
  white-space: nowrap;
}

.workspace {
  display: flex;
  flex: 1;
  min-height: 0;
}
.docks {
  display: flex;
  flex-direction: column;
  width: 451px;
  flex: none;
}
.dock {
  display: flex;
  flex-direction: column;
}
.dock-title {
  display: flex;
  align-items: center;
  gap: 3px;
  height: 19px;
  padding: 0 2px 0 4px;
}
.dock-title h2 {
  flex: 1;
}
.dock-title svg {
  width: 11px;
  height: 11px;
}
.dock-tools {
  display: flex;
  align-items: center;
  height: 31px;
  padding: 0 0 1px 3px;
}
.dock-tools button {
  display: flex;
  align-items: center;
  justify-content: center;
  width: 25px;
}
.dock-tools .drop {
  justify-content: flex-start;
  width: 37px;
  padding-left: 4px;
  gap: 6px;
}
.dock-tools svg {
  width: 16px;
  height: 16px;
}

/* 浏览树 */
.tree-box {
  display: flex;
  height: 248px;
  overflow: hidden;
  border: 1px solid #b6b6b6;
  background: #fff;
}
.tree {
  flex: 1;
  list-style: none;
}
.tree li {
  display: flex;
  align-items: center;
  gap: 7px;
  height: 19px;
  line-height: 19px;
  white-space: nowrap;
}
.tree svg {
  width: 14px;
  height: 14px;
}
.tree .lvl0 { padding-left: 84px; }
.tree .lvl1 { padding-left: 104px; }
.tree .lvl2 { padding-left: 124px; }
.tree .lvl3 { padding-left: 144px; }
.tree .lvl4 { padding-left: 164px; }
.tree .closed::before, .tree .open::before {
  content: "";
  border: 4px solid transparent;
}
.tree .closed::before {
  margin: 0 5px 0 -16px;
  border-width: 4px 0 4px 4px;
  border-left-color: #555;
}
.tree .open::before {
  margin: 0 3px 0 -18px;
  border-width: 4px 4px 0;
  border-top-color: #555;
}
.scrollbar {
  display: flex;
  flex-direction: column;
  width: 14px;
  border-left: 1px solid #b6b6b6;
  background: #e6e6e6;
}
.scrollbar button {
  display: flex;
  align-items: center;
  justify-content: center;
  height: 14px;
  background: #fafafa;
  border-bottom: 1px solid #b6b6b6;
}
.scrollbar button:last-child {
  border-top: 1px solid #b6b6b6;
  border-bottom: none;
}
.track {
  flex: 1;
  padding-top: 50px;
}
.thumb {
  height: 28px;
  border: solid #b6b6b6;
  border-width: 1px 0;
  background: #fafafa;
}
.split-h {
  height: 6px;
  width: 17px;
  align-self: center;
  background: repeating-linear-gradient(90deg, #aaa 0 1px, transparent 1px 3px) 0 2px / 100% 1px no-repeat;
}
.layers {
  flex: 1;
}
.layer-list {
  flex: 1;
  border: 1px solid #b6b6b6;
  background: #fff;
}
.split-v {
  display: flex;
  align-items: center;
  justify-content: center;
  gap: 4px;
  width: 6px;
}
.split-v i {
  width: 1px;
  height: 17px;
  margin-top: 8px;
  background: repeating-linear-gradient(#aaa 0 1px, transparent 1px 3px);
}
.split-v i:last-child {
  margin: 0 0 24px;
}

/* 项目模板 */
.center {
  display: flex;
  flex-direction: column;
  flex: 1;
  min-width: 0;
}
.center h2 {
  height: 30px;
  padding-left: 12px;
  background: repeating-linear-gradient(90deg, #aaa 0 1px, transparent 1px 3px) 50% 1px / 17px 1px no-repeat;
  font-size: 17px;
  line-height: 27px;
}
.templates {
  flex: 1;
  margin-left: 4px;
  padding: 5px 6px 5px 5px;
  border: 1px solid #b6b6b6;
  background: #fff;
}
.template {
  display: flex;
  gap: 21px;
  padding: 6px 6px 4px;
  border-radius: 10px;
  background: #efefef;
}
.preview {
  display: flex;
  justify-content: center;
  width: 250px;
  padding: 20px 0 19px;
  border-radius: 8px;
  background: #fff;
}
.preview svg {
  width: 211px;
  height: 138px;
}
.info h3 {
  margin-top: 5px;
  font-size: 14px;
  line-height: 22px;
}
.info p {
  margin-top: 9px;
  font-family: "Liberation Mono", "Noto Sans CJK SC", monospace;
  font-size: 10px;
}
.news {
  display: flex;
  justify-content: space-between;
  align-items: center;
  height: 26px;
  margin-top: 6px;
  padding-left: 4px;
  border: 1px solid #8c9a88;
  background: #dff0d8;
  font-family: "Liberation Mono", "Noto Sans CJK SC", monospace;
  font-size: 10px;
}
.news b {
  font-size: 12px;
}
.news a {
  color: #2a8a0e;
}
.news-scroll {
  display: flex;
  flex-direction: column;
  gap: 1px;
}
.news-scroll button {
  width: 13px;
  height: 10px;
  border: 1px solid;
  border-color: #fff #777 #777 #fff;
}

/* 状态栏 */
.statusbar {
  display: flex;
  align-items: center;
  height: 28px;
  flex: none;
  padding: 0 7px 0 4px;
  font-family: "Liberation Mono", "Noto Sans CJK SC", monospace;
  font-size: 10px;
}
.statusbar label {
  font-size: 11px;
  white-space: nowrap;
}
.statusbar svg {
  width: 16px;
  height: 16px;
}
.statusbar input[type="text"], .field, .locator {
  height: 22px;
  border: 1px solid #aaa;
  border-radius: 3px;
  background: #fff;
}
.statusbar .field input[type="text"], .statusbar .locator input {
  flex: 1;
  width: 100%;
  height: 20px;
  border: none;
  padding: 0 4px;
}
.locator {
  display: flex;
  align-items: center;
  width: 200px;
  padding-left: 8px;
  margin-right: auto;
}
.statusbar .locator svg {
  width: 13px;
  height: 13px;
}
.statusbar .locator input {
  padding-left: 7px;
  font-size: 11px;
}
.locator input::placeholder {
  color: #808080;
}
.status-group {
  display: flex;
  align-items: center;
  gap: 3px;
}
.field {
  display: flex;
  align-items: center;
}
.field button {
  display: flex;
  flex-direction: column;
  align-items: center;
  justify-content: center;
  gap: 3px;
  width: 15px;
  height: 20px;
  flex: none;
  border-left: 1px solid #aaa;
}
.coord input {
  width: 100px;
  padding: 0 5px;
}
.scale {
  margin-left: 13px;
}
.combo {
  width: 83px;
}
.combo button {
  width: 21px;
  background: linear-gradient(#fff, #eee);
}
.scale > button {
  margin-left: 7px;
}
.magnifier {
  margin-left: 7px;
}
.magnifier .field {
  width: 92px;
}
.rotation {
  margin-left: 10px;
  gap: 8px;
}
.rotation .field {
  width: 89px;
}
.render {
  margin-left: 6px;
  gap: 6px;
}
.render input {
  appearance: none;
  width: 14px;
  height: 14px;
  margin: 0;
  border: 1px solid #aaa;
  background: #fff;
}
.render input:checked::before {
  content: "";
  display: block;
  width: 5px;
  height: 9px;
  margin-left: 4px;
  border: solid #000;
  border-width: 0 2px 2px 0;
  transform: rotate(40deg);
}
.crs {
  display: flex;
  align-items: center;
  gap: 4px;
  margin-left: 17px;
}
.messages {
  margin-left: 25px;
}
```
